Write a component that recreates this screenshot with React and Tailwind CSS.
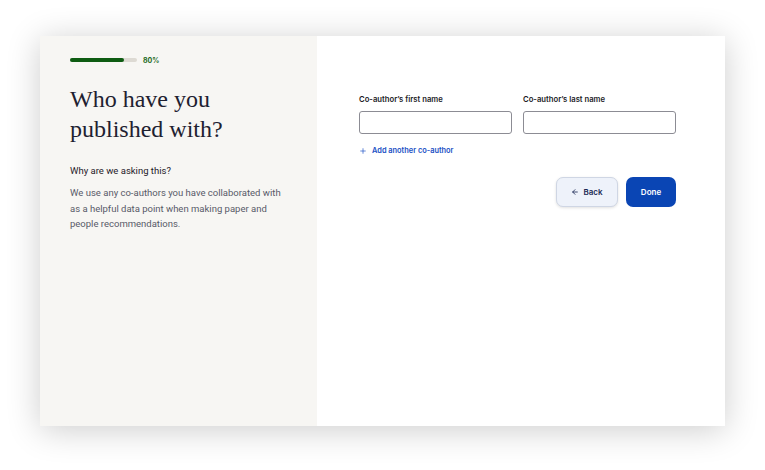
import { ArrowLeft, Plus } from 'lucide-react';

export default function App() {
  return (
    <div className="w-[765px] h-[470px] bg-white pt-[36px] pl-[40px]">
      <div className="flex w-[685px] h-[390px] bg-white shadow-[0_4px_32px_rgba(0,0,0,0.2)]">
        {/* left: question */}
        <div className="w-[277px] bg-[#f7f6f3] pl-[30px] pr-[24px] pt-[20px]">
          <div className="flex items-center gap-[6px] h-[8px]">
            <div className="w-[67px] h-[4px] rounded-full bg-[#dddad3]">
              <div className="w-[80%] h-full rounded-full bg-[#0e5c12]" />
            </div>
            <span className="text-[7px] font-bold text-[#1f6b1f] font-['Inter',sans-serif] leading-none">80%</span>
          </div>

          <h1 className="mt-[20px] text-[24px] leading-[30px] text-[#1e2130] font-['Liberation_Serif',serif]">
            Who have you published with?
          </h1>

          <p className="mt-[19px] text-[9.5px] leading-[16px] text-[#1f2029] font-['Roboto',sans-serif]">Why are we asking this?</p>
          <p className="mt-[6px] text-[9.5px] leading-[15.5px] text-[#585a68] font-['Roboto',sans-serif]">
            We use any co-authors you have collaborated with as a helpful data point when making paper and people recommendations.
          </p>
        </div>

        {/* right: form */}
        <div className="flex-1 pl-[42px] pr-[49px] pt-[59px] font-['Inter',sans-serif]">
          <div className="grid grid-cols-2 gap-[11px]">
            <label className="flex flex-col">
              <span className="text-[7.7px] font-semibold text-[#1b1b1f] leading-[10px]">Co-author’s first name</span>
              <input type="text" className="mt-[6px] h-[23px] rounded-[3px] border border-[#8c8c94] bg-white outline-none" />
            </label>
            <label className="flex flex-col">
              <span className="text-[7.7px] font-semibold text-[#1b1b1f] leading-[10px]">Co-author’s last name</span>
              <input type="text" className="mt-[6px] h-[23px] rounded-[3px] border border-[#8c8c94] bg-white outline-none" />
            </label>
          </div>

          <button className="mt-[12px] flex items-center gap-[5px] text-[7.4px] font-semibold text-[#1a4fc4] leading-[10px]">
            <Plus size={8} strokeWidth={2} />
            Add another co-author
          </button>

          <div className="mt-[21px] flex justify-end gap-[8px]">
            <button className="flex items-center justify-center gap-[4px] w-[62px] h-[30px] rounded-[7px] bg-[#eef2fa] border border-[#cfd6e4] shadow-[0_1px_3px_rgba(0,0,0,0.12)] text-[8px] font-semibold text-[#1c2a55]">
              <ArrowLeft size={8} strokeWidth={2.5} />
              Back
            </button>
            <button className="w-[50px] h-[30px] rounded-[7px] bg-[#0a45b4] text-[8px] font-semibold text-white">
              Done
            </button>
          </div>
        </div>
      </div>
    </div>
  );
}
